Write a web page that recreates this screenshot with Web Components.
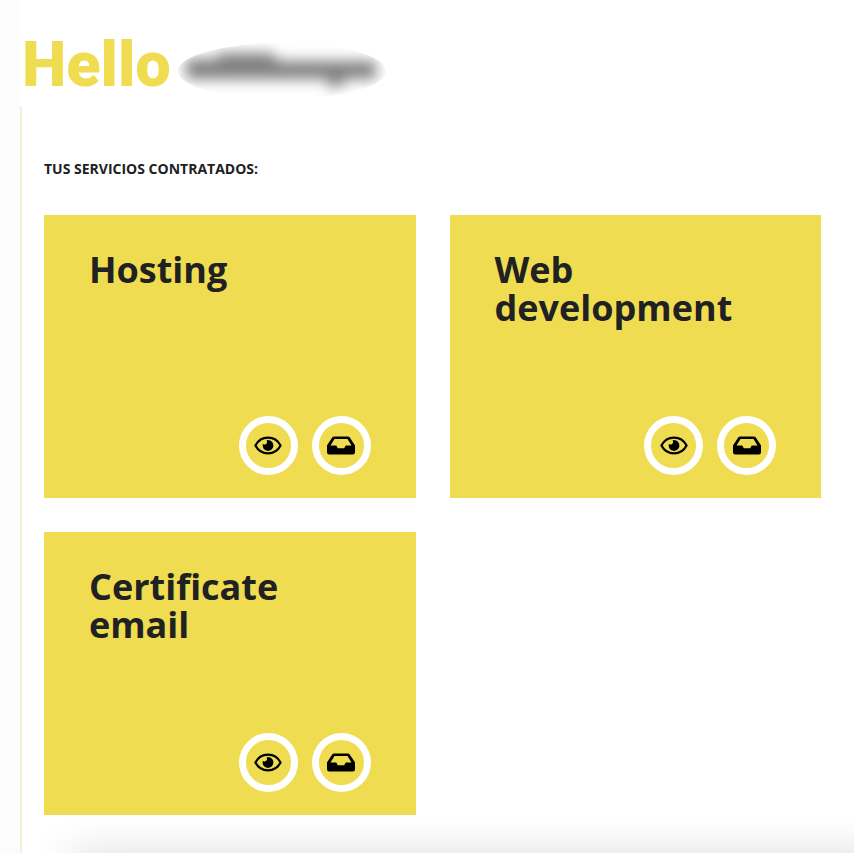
<!DOCTYPE html>
<html lang="es">
<head>
<meta charset="utf-8">
<meta name="viewport" content="width=device-width, initial-scale=1">
<title>Hello</title>
<style>
  html, body { height: 100%; }
  body {
    margin: 0;
    background: #fff;
    color: #202122;
    font-family: "Open Sans", "Noto Sans", sans-serif;
  }
</style>
</head>
<body>

<client-dashboard>
  <user-greeting slot="greeting">Hello</user-greeting>
  <service-grid heading="Tus servicios contratados:">
    <service-card name="Hosting"></service-card>
    <service-card name="Web development"></service-card>
    <service-card name="Certificate email"></service-card>
  </service-grid>
</client-dashboard>

<script>
// client-dashboard: page frame with the side line and the bottom shade
class ClientDashboard extends HTMLElement {
  constructor() {
    super();
    this.attachShadow({ mode: 'open' }).innerHTML = `
      <style>
        :host {
          --brand: #efdc50;
          display: flex;
          flex-direction: column;
          box-sizing: border-box;
          height: 100%;
          overflow: hidden;
          position: relative;
          padding-left: 20px;
          background: linear-gradient(90deg, #fcfcfc 20px, #fff 20px);
        }
        main {
          flex: 1 0 auto;
          box-sizing: border-box;
          padding: 53px 33px 38px 22px;
          border-left: 2px solid #f5f2d4;
        }
        .shade {
          position: absolute;
          left: 70px;
          right: -40px;
          bottom: -26px;
          height: 20px;
          border-radius: 20px;
          box-shadow: 0 0 44px 0 rgba(0, 0, 0, 0.24);
          pointer-events: none;
        }
      </style>
      <slot name="greeting"></slot>
      <main><slot></slot></main>
      <div class="shade"></div>
    `;
  }
}

// user-greeting: big title, the user name is hidden behind a blur
class UserGreeting extends HTMLElement {
  constructor() {
    super();
    this.attachShadow({ mode: 'open' }).innerHTML = `
      <style>
        :host {
          display: flex;
          align-items: center;
          gap: 7px;
          box-sizing: border-box;
          height: 106px;
          padding: 24px 0 0 2px;
        }
        h1 {
          margin: 0;
          color: var(--brand);
          font: 900 63px/82px Roboto, sans-serif;
        }
        svg { display: block; margin-top: 12px; }
      </style>
      <h1><slot></slot></h1>
      <svg width="208" height="56" viewBox="0 0 208 56" aria-hidden="true">
        <defs>
          <clipPath id="oval"><ellipse cx="104" cy="28" rx="104" ry="28"/></clipPath>
          <filter id="soft" x="-20%" y="-80%" width="140%" height="260%" color-interpolation-filters="sRGB">
            <feGaussianBlur stdDeviation="7"/>
          </filter>
        </defs>
        <g clip-path="url(#oval)">
          <g filter="url(#soft)" fill="#808080">
            <path d="M8 16H40V10H94L100 18H198V36H168L162 44H150V36H8Z"/>
          </g>
        </g>
      </svg>
    `;
  }
}

// service-grid: heading and the cards, two per row
class ServiceGrid extends HTMLElement {
  constructor() {
    super();
    this.attachShadow({ mode: 'open' }).innerHTML = `
      <style>
        :host { display: block; }
        h2 {
          margin: 0 0 36px;
          font-size: 14px;
          font-weight: 700;
          line-height: 20px;
          text-transform: uppercase;
        }
        .grid {
          display: grid;
          grid-template-columns: repeat(2, minmax(0, 1fr));
          gap: 34px;
        }
      </style>
      <h2></h2>
      <div class="grid"><slot></slot></div>
    `;
  }

  connectedCallback() {
    this.shadowRoot.querySelector('h2').textContent = this.getAttribute('heading');
  }
}

// service-card: service name and its two actions
class ServiceCard extends HTMLElement {
  constructor() {
    super();
    this.attachShadow({ mode: 'open' }).innerHTML = `
      <style>
        :host {
          display: flex;
          flex-direction: column;
          justify-content: space-between;
          box-sizing: border-box;
          min-height: 283px;
          padding: 36px 45px 23px;
          background: var(--brand);
        }
        h3 {
          margin: 0;
          font-size: 36px;
          font-weight: 700;
          line-height: 38px;
        }
        .actions {
          display: flex;
          justify-content: flex-end;
          gap: 14px;
        }
      </style>
      <h3></h3>
      <div class="actions">
        <round-button icon="eye" label="Ver"></round-button>
        <round-button icon="inbox" label="Bandeja"></round-button>
      </div>
    `;
  }

  connectedCallback() {
    this.shadowRoot.querySelector('h3').textContent = this.getAttribute('name');
  }
}

const ICONS = {
  eye: `
    <path d="M1.4 9.5C4 4.6 8.5 1.6 14 1.6S24 4.6 26.6 9.5C24 14.4 19.5 17.4 14 17.4S4 14.4 1.4 9.5Z"
      fill="none" stroke="#000" stroke-width="2.2" stroke-linejoin="round"/>
    <path d="M14 4.1A5.4 5.4 0 1 1 8.8 8.1C10.7 9.3 13.3 8.2 13 5.7Q12.9 4.9 12.5 4.4Q13.2 4.1 14 4.1Z"/>`,
  inbox: `
    <path fill-rule="evenodd"
      d="M6.9 .5H21.1Q22.1 .5 22.6 1.3L27.6 8.8Q28 9.4 28 10V16.3Q28 18.5 25.8 18.5H2.2Q0 18.5 0 16.3V10Q0 9.4 .4 8.8L5.4 1.3Q5.9 .5 6.9 .5ZM7.5 2.9L3.5 9.5H9.3L10.8 12.3H17.2L18.7 9.5H24.5L20.5 2.9Z"/>`
};

class RoundButton extends HTMLElement {
  constructor() {
    super();
    this.attachShadow({ mode: 'open' }).innerHTML = `
      <style>
        :host { display: block; }
        button {
          display: flex;
          align-items: center;
          justify-content: center;
          box-sizing: border-box;
          width: 59px;
          height: 59px;
          padding: 0;
          border: 7px solid #fff;
          border-radius: 50%;
          background: none;
          color: #000;
          cursor: pointer;
        }
        svg { display: block; }
      </style>
      <button type="button">
        <svg width="28" height="19" viewBox="0 0 28 19"></svg>
      </button>
    `;
  }

  connectedCallback() {
    this.shadowRoot.querySelector('svg').innerHTML = ICONS[this.getAttribute('icon')];
    this.shadowRoot.querySelector('button').setAttribute('aria-label', this.getAttribute('label'));
  }
}

customElements.define('client-dashboard', ClientDashboard);
customElements.define('user-greeting', UserGreeting);
customElements.define('service-grid', ServiceGrid);
customElements.define('service-card', ServiceCard);
customElements.define('round-button', RoundButton);
</script>
</body>
</html>
